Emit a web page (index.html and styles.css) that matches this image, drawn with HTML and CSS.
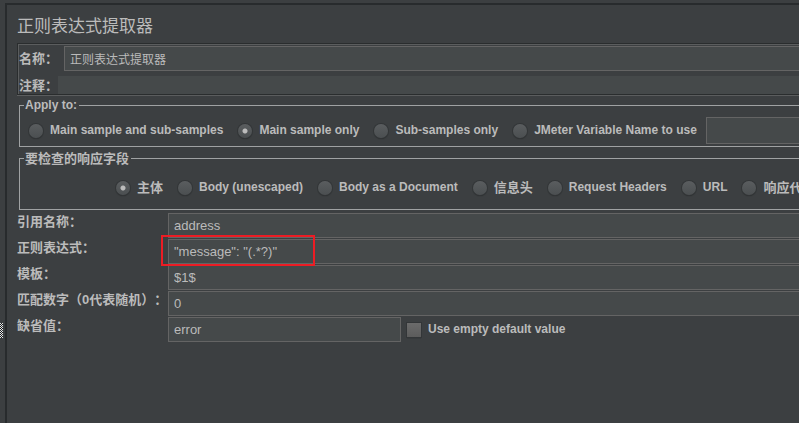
FILE: index.html
```html
<!DOCTYPE html>
<html lang="zh-CN">
<head>
<meta charset="utf-8">
<title>正则表达式提取器</title>
<link rel="stylesheet" href="styles.css">
</head>
<body>
<div class="window">
  <div class="splitter">
    <svg class="grip" width="4" height="16" viewBox="0 0 4 16" aria-hidden="true">
      <defs>
        <pattern id="dots" width="4" height="4" patternUnits="userSpaceOnUse">
          <path fill="#e4e6e7" d="M0 0h1v1H0zM2 0h1v1H2zM1 1h1v1H1zM0 2h1v1H0zM2 2h1v1H2zM1 3h1v1H1z"/>
          <path fill="#17191a" d="M1 0h1v1H1zM0 1h1v1H0zM2 1h1v1H2zM1 2h1v1H1zM0 3h1v1H0z"/>
        </pattern>
      </defs>
      <rect width="3" height="15" fill="url(#dots)"/>
    </svg>
  </div>
  <main class="panel">
    <h1 class="title">正则表达式提取器</h1>

    <div class="meta">
      <div class="meta-row">
        <label for="name">名称：</label>
        <input class="field small" id="name" type="text" value="正则表达式提取器">
      </div>
      <div class="meta-row comment">
        <label for="comment">注释：</label>
        <input class="plain" id="comment" type="text">
      </div>
    </div>

    <fieldset class="group">
      <legend class="latin">Apply to:</legend>
      <div class="options scope">
        <label class="option latin"><input type="radio" name="scope">Main sample and sub-samples</label>
        <label class="option latin"><input type="radio" name="scope" checked>Main sample only</label>
        <label class="option latin"><input type="radio" name="scope">Sub-samples only</label>
        <label class="option latin"><input type="radio" name="scope">JMeter Variable Name to use</label>
        <input class="field variable" type="text" aria-label="JMeter Variable Name">
      </div>
    </fieldset>

    <fieldset class="group">
      <legend>要检查的响应字段</legend>
      <div class="options source">
        <label class="option"><input type="radio" name="source" checked>主体</label>
        <label class="option latin"><input type="radio" name="source">Body (unescaped)</label>
        <label class="option latin"><input type="radio" name="source">Body as a Document</label>
        <label class="option"><input type="radio" name="source">信息头</label>
        <label class="option latin"><input type="radio" name="source">Request Headers</label>
        <label class="option latin"><input type="radio" name="source">URL</label>
        <label class="option"><input type="radio" name="source">响应代码</label>
      </div>
    </fieldset>

    <div class="form">
      <label for="ref">引用名称：</label>
      <input class="field" id="ref" type="text" value="address">
      <label for="regex">正则表达式：</label>
      <div class="marked"><input class="field" id="regex" type="text" value="&quot;message&quot;: &quot;(.*?)&quot;"></div>
      <label for="template">模板：</label>
      <input class="field" id="template" type="text" value="$1$">
      <label for="match">匹配数字（0代表随机）：</label>
      <input class="field" id="match" type="text" value="0">
      <label for="default">缺省值：</label>
      <div class="default">
        <input class="field" id="default" type="text" value="error">
        <label class="option latin"><input type="checkbox">Use empty default value</label>
      </div>
    </div>
  </main>
</div>
</body>
</html>
```

FILE: styles.css
```css
*,
*::after {
  box-sizing: border-box;
}

body {
  margin: 0;
  background: #3c3f41;
  color: #bbbbbb;
  font: bold 13px/15px "Liberation Sans", "Noto Sans CJK SC", sans-serif;
  text-spacing-trim: space-all;
}

.window {
  display: flex;
  min-height: 100vh;
  padding-top: 3px;
  overflow: hidden;
}

.splitter {
  flex: none;
  width: 5px;
  padding-top: 320px;
}

.grip {
  display: block;
}

.panel {
  flex: 1;
  min-width: 0;
  padding: 4px 0 0 10px;
  border: solid #282b2d;
  border-width: 2px 0 0 2px;
}

.title {
  margin: 0;
  padding-top: 2px;
  font-size: 17px;
  font-weight: normal;
  line-height: 32px;
}

.meta {
  padding: 1px 0 0 1px;
  border: solid #2a2d2e;
  border-width: 1px 0 1px 1px;
  box-shadow: inset 1px 1px #5b5d5e, 0 1px #5b5d5e;
}

.meta-row {
  display: flex;
  align-items: center;
  padding-top: 1px;
}

.meta-row label {
  flex: none;
  width: 45px;
  white-space: nowrap;
}

.comment {
  padding-top: 5px;
}

.comment label {
  width: 39px;
}

.field,
.plain {
  flex: 1;
  width: 100%;
  min-width: 0;
  height: 25px;
  margin: 0;
  padding: 0 5px 1px;
  border: 1px solid #646464;
  border-right: 0;
  border-radius: 0;
  outline: 0;
  background: #45494a;
  color: #bbbbbb;
  font: 13px "Liberation Sans", "Noto Sans CJK SC", sans-serif;
}

.small,
.latin {
  font-size: 12px;
}

.plain {
  height: 18px;
  border: 0;
}

.group {
  min-width: 0;
  margin: 3px 0 0 2px;
  padding: 0 0 0 9px;
  border: 1px solid #a0a2a3;
  border-right: 0;
}

.group + .group {
  margin-top: 4px;
}

.group legend {
  margin-left: -5px;
  padding: 0 2px 0 1px;
}

.options {
  display: flex;
  align-items: center;
  gap: 15px;
}

.scope {
  padding: 4px 0 2px;
}

.source {
  height: 43px;
  padding-left: 87px;
}

.option {
  display: flex;
  flex: none;
  align-items: center;
  gap: 7px;
  white-space: nowrap;
}

.variable {
  height: 27px;
  margin-left: -6px;
}

input[type="radio"],
input[type="checkbox"] {
  appearance: none;
  flex: none;
  width: 14px;
  height: 14px;
  margin: 0;
  background: linear-gradient(#5a5d5f, #4b4f51);
  box-shadow: 0 0 0 1px #333638, 0 1px 1px #242627;
}

input[type="radio"] {
  border-radius: 50%;
}

input[type="radio"]:checked {
  background: radial-gradient(circle, #bcbcbc 2px, transparent 3px), linear-gradient(#5a5d5f, #4b4f51);
}

input[type="checkbox"] {
  background: linear-gradient(#6b6b6b, #5c5c5c);
}

.form {
  display: grid;
  grid-template-columns: 151px minmax(0, 1fr);
  row-gap: 1px;
  margin-top: 3px;
}

.form > label {
  padding-top: 1px;
  white-space: nowrap;
}

.marked {
  position: relative;
  display: flex;
}

.marked::after {
  content: "";
  position: absolute;
  top: -4px;
  left: -7px;
  width: 154px;
  height: 31px;
  border: 2px solid #ed1c24;
  pointer-events: none;
}

.default {
  display: flex;
  align-items: center;
  gap: 6px;
}

.default .field {
  flex: 0 1 233px;
  border-right: 1px solid #646464;
}
```
